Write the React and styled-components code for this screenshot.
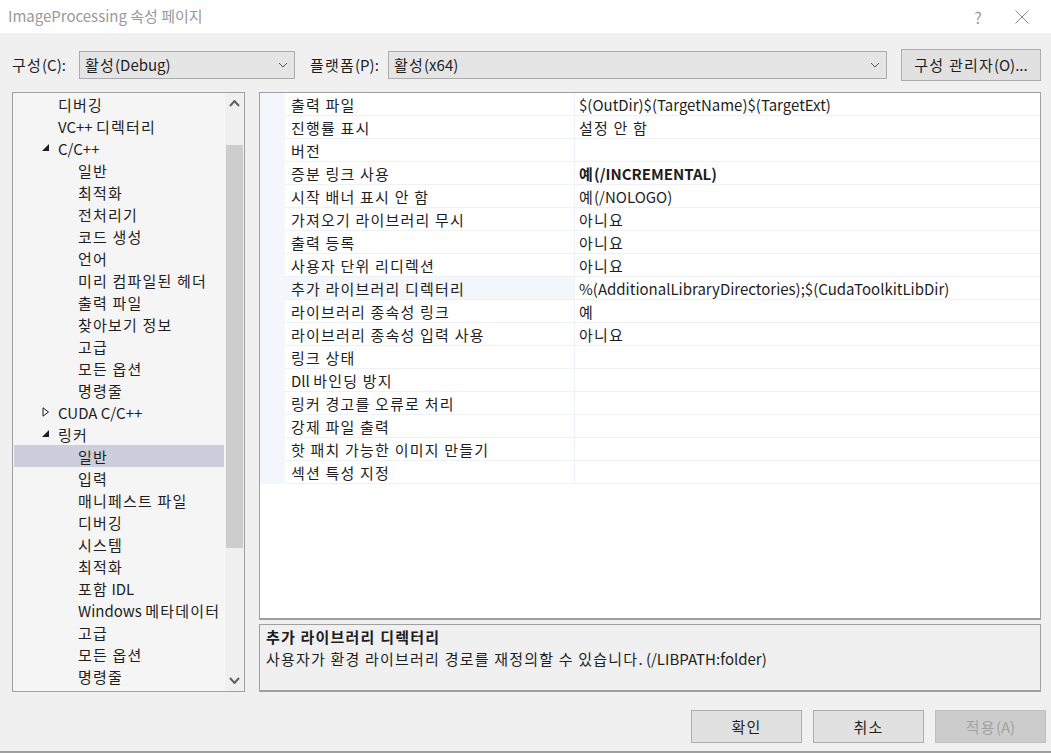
import React from "react";
import styled, { createGlobalStyle } from "styled-components";

const Global = createGlobalStyle`
  html, body { margin: 0; padding: 0; background: #f0f0f0; }
  body { font-family: "Noto Sans CJK KR", "Noto Sans", sans-serif; color: #1e1e1e; }
  * { box-sizing: border-box; }
`;

const FONT = `"Noto Sans CJK KR", "Noto Sans", sans-serif`;

const HangulRun = styled.span`
  letter-spacing: 1.2px;
`;

const T = ({ children }) => {
  const s = String(children);
  const parts = s.split(/([\u3131-\ud7a3]+(?:\s+[\u3131-\ud7a3]+)*)/);
  return parts.map((p, i) =>
    /[\u3131-\ud7a3]/.test(p) ? <HangulRun key={i}>{p}</HangulRun> : p ? <React.Fragment key={i}>{p}</React.Fragment> : null
  );
};

const Window = styled.div`
  width: 1051px;
  height: 753px;
  display: flex;
  flex-direction: column;
  background: #f0f0f0;
  border-bottom: 2px solid #9f9f9f;
  font-family: ${FONT};
  font-size: 15px;
  overflow: hidden;
`;

const TitleBar = styled.div`
  height: 33px;
  flex: none;
  background: #ffffff;
  display: flex;
  align-items: center;
  padding-left: 8px;
`;

const Title = styled.div`
  flex: 1;
  color: #999999;
  font-size: 15px;
  line-height: 20px;
  margin-top: -2px;
`;

const TitleButton = styled.div`
  width: ${(p) => p.$w}px;
  height: 32px;
  display: flex;
  align-items: center;
  justify-content: center;
  color: #9a9a9a;
  font-size: 16px;
`;

const ConfigRow = styled.div`
  display: flex;
  align-items: center;
  height: 32px;
  margin-top: 16px;
  padding-left: 12px;
`;

const Label = styled.div`
  width: ${(p) => p.$w}px;
  flex: none;
  font-size: 15px;
  line-height: 20px;
  color: #1e1e1e;
`;

const Combo = styled.div`
  width: ${(p) => p.$w}px;
  height: 28px;
  flex: none;
  margin-right: ${(p) => p.$mr || 0}px;
  background: #e5e5e5;
  border: 1px solid #acacac;
  display: flex;
  align-items: center;
  padding: 0 6px 0 5px;
  font-size: 15px;
  color: #1e1e1e;
`;

const ComboText = styled.div`
  flex: 1;
  line-height: 20px;
`;

const Button = styled.div`
  width: ${(p) => p.$w}px;
  height: ${(p) => p.$h}px;
  flex: none;
  background: ${(p) => (p.$disabled ? "#cccccc" : "#e1e1e1")};
  border: 1px solid ${(p) => (p.$disabled ? "#bfbfbf" : "#adadad")};
  color: ${(p) => (p.$disabled ? "#a2a2a2" : "#1e1e1e")};
  display: flex;
  align-items: center;
  justify-content: center;
  font-size: 15px;
  line-height: 20px;
`;

const Main = styled.div`
  display: flex;
  margin-top: 11px;
  padding-left: 12px;
  height: 600px;
  gap: 14px;
`;

const TreePanel = styled.div`
  width: 233px;
  height: 600px;
  flex: none;
  border: 1px solid #a0a0a0;
  background: #f5f5f5;
  display: flex;
`;

const TreeList = styled.div`
  flex: 1;
  padding: 0 0 0 1px;
  display: flex;
  flex-direction: column;
  overflow: hidden;
`;

const TreeRow = styled.div`
  height: 22px;
  flex: none;
  display: flex;
  align-items: center;
  padding-left: ${(p) => p.$level * 20 + 4}px;
  background: ${(p) => (p.$selected ? "#cccedb" : "transparent")};
  font-size: 15px;
  color: #1e1e1e;
  white-space: pre;
`;

const Expander = styled.div`
  width: 20px;
  height: 22px;
  flex: none;
  display: flex;
  align-items: center;
  justify-content: center;
  padding-right: 4px;
`;

const ScrollBar = styled.div`
  width: 20px;
  flex: none;
  background: #f0f0f0;
  border-left: 1px solid #f8f8f8;
  display: flex;
  flex-direction: column;
`;

const ScrollArrow = styled.div`
  height: 21px;
  flex: none;
  display: flex;
  align-items: center;
  justify-content: center;
`;

const ScrollTrack = styled.div`
  flex: 1;
  padding: 31px 1px 0 1px;
`;

const Thumb = styled.div`
  height: 403px;
  background: #cdcdcd;
`;

const RightCol = styled.div`
  width: 782px;
  flex: none;
  display: flex;
  flex-direction: column;
  gap: 4px;
`;

const Grid = styled.div`
  height: 528px;
  flex: none;
  background: #ffffff;
  border: 1px solid #a0a0a0;
  border-bottom-width: 2px;
  display: flex;
  flex-direction: column;
`;

const GridRow = styled.div`
  height: 23px;
  display: flex;
  flex: none;
`;

const Gutter = styled.div`
  width: 25px;
  flex: none;
  background: #f3f6fb;
`;

const NameCell = styled.div`
  width: 289px;
  flex: none;
  padding-left: 6px;
  display: flex;
  align-items: center;
  border-bottom: 1px solid #eef1f6;
  background: ${(p) => (p.$selected ? "#f3f6fb" : "#ffffff")};
  white-space: pre;
`;

const ValueCell = styled.div`
  flex: 1;
  padding-left: 4px;
  display: flex;
  align-items: center;
  border-left: 1px solid #eef1f6;
  border-bottom: 1px solid #eef1f6;
  font-weight: ${(p) => (p.$bold ? 700 : 400)};
  white-space: pre;
`;

const Desc = styled.div`
  height: 68px;
  flex: none;
  border: 1px solid #a0a0a0;
  border-bottom-width: 2px;
  background: #f0f0f0;
  padding: 1px 6px 0 6px;
  display: flex;
  flex-direction: column;
`;

const DescTitle = styled.div`
  font-weight: 700;
  line-height: 22px;
`;

const DescText = styled.div`
  line-height: 22px;
`;

const Footer = styled.div`
  display: flex;
  justify-content: flex-end;
  gap: 11px;
  margin-top: 18px;
  padding-right: 5px;
`;

const Chevron = ({ up, color = "#606060", w = 10, h = 6, sw = 1 }) => (
  <svg width={w} height={h} viewBox={`0 0 ${w} ${h}`}>
    <polyline
      points={up ? `1,${h - 1} ${w / 2},1 ${w - 1},${h - 1}` : `1,1 ${w / 2},${h - 1} ${w - 1},1`}
      fill="none"
      stroke={color}
      strokeWidth={sw}
    />
  </svg>
);

const ExpandIcon = ({ state }) =>
  state === "open" ? (
    <svg width="8" height="8" viewBox="0 0 8 8">
      <polygon points="7,0 7,7 0,7" fill="#1e1e1e" />
    </svg>
  ) : (
    <svg width="8" height="10" viewBox="0 0 8 10">
      <polygon points="1,0.8 6.5,5 1,9.2" fill="none" stroke="#1e1e1e" strokeWidth="1" />
    </svg>
  );

const treeItems = [
  { l: 1, t: "디버깅" },
  { l: 1, t: "VC++ 디렉터리" },
  { l: 1, t: "C/C++", e: "open" },
  { l: 2, t: "일반" },
  { l: 2, t: "최적화" },
  { l: 2, t: "전처리기" },
  { l: 2, t: "코드 생성" },
  { l: 2, t: "언어" },
  { l: 2, t: "미리 컴파일된 헤더" },
  { l: 2, t: "출력 파일" },
  { l: 2, t: "찾아보기 정보" },
  { l: 2, t: "고급" },
  { l: 2, t: "모든 옵션" },
  { l: 2, t: "명령줄" },
  { l: 1, t: "CUDA C/C++", e: "closed" },
  { l: 1, t: "링커", e: "open" },
  { l: 2, t: "일반", s: true },
  { l: 2, t: "입력" },
  { l: 2, t: "매니페스트 파일" },
  { l: 2, t: "디버깅" },
  { l: 2, t: "시스템" },
  { l: 2, t: "최적화" },
  { l: 2, t: "포함 IDL" },
  { l: 2, t: "Windows 메타데이터" },
  { l: 2, t: "고급" },
  { l: 2, t: "모든 옵션" },
  { l: 2, t: "명령줄" },
];

const props = [
  ["출력 파일", "$(OutDir)$(TargetName)$(TargetExt)"],
  ["진행률 표시", "설정 안 함"],
  ["버전", ""],
  ["증분 링크 사용", "예(/INCREMENTAL)", "bold"],
  ["시작 배너 표시 안 함", "예(/NOLOGO)"],
  ["가져오기 라이브러리 무시", "아니요"],
  ["출력 등록", "아니요"],
  ["사용자 단위 리디렉션", "아니요"],
  ["추가 라이브러리 디렉터리", "%(AdditionalLibraryDirectories);$(CudaToolkitLibDir)", "sel"],
  ["라이브러리 종속성 링크", "예"],
  ["라이브러리 종속성 입력 사용", "아니요"],
  ["링크 상태", ""],
  ["Dll 바인딩 방지", ""],
  ["링커 경고를 오류로 처리", ""],
  ["강제 파일 출력", ""],
  ["핫 패치 가능한 이미지 만들기", ""],
  ["섹션 특성 지정", ""],
];

export default function App() {
  return (
    <>
      <Global />
      <Window>
        <TitleBar>
          <Title>ImageProcessing 속성 페이지</Title>
          <TitleButton $w={30}>?</TitleButton>
          <TitleButton $w={58}>
            <svg width="14" height="14" viewBox="0 0 14 14">
              <path d="M0.5,0.5 L13.5,13.5 M13.5,0.5 L0.5,13.5" stroke="#8a8a8a" strokeWidth="1" />
            </svg>
          </TitleButton>
        </TitleBar>

        <ConfigRow>
          <Label $w={67}><T>구성(C):</T></Label>
          <Combo $w={216} $mr={15}>
            <ComboText><T>활성(Debug)</T></ComboText>
            <Chevron color="#555" w={10} h={6} />
          </Combo>
          <Label $w={78}><T>플랫폼(P):</T></Label>
          <Combo $w={499} $mr={14}>
            <ComboText><T>활성(x64)</T></ComboText>
            <Chevron color="#555" w={10} h={6} />
          </Combo>
          <Button $w={140} $h={32}><span><T>구성 관리자(O)...</T></span></Button>
        </ConfigRow>

        <Main>
          <TreePanel>
            <TreeList>
              {treeItems.map((it, i) => (
                <TreeRow key={i} $level={it.l} $selected={it.s}>
                  <Expander>{it.e ? <ExpandIcon state={it.e} /> : null}</Expander>
                  <span><T>{it.t}</T></span>
                </TreeRow>
              ))}
            </TreeList>
            <ScrollBar>
              <ScrollArrow>
                <Chevron up color="#606060" w={11} h={7} sw={2} />
              </ScrollArrow>
              <ScrollTrack>
                <Thumb />
              </ScrollTrack>
              <ScrollArrow>
                <Chevron color="#606060" w={11} h={7} sw={2} />
              </ScrollArrow>
            </ScrollBar>
          </TreePanel>

          <RightCol>
            <Grid>
              {props.map(([n, v, f], i) => (
                <GridRow key={i}>
                  <Gutter />
                  <NameCell $selected={f === "sel"}><span><T>{n}</T></span></NameCell>
                  <ValueCell $bold={f === "bold"}><span><T>{v}</T></span></ValueCell>
                </GridRow>
              ))}
            </Grid>
            <Desc>
              <DescTitle><T>추가 라이브러리 디렉터리</T></DescTitle>
              <DescText><T>사용자가 환경 라이브러리 경로를 재정의할 수 있습니다. (/LIBPATH:folder)</T></DescText>
            </Desc>
          </RightCol>
        </Main>

        <Footer>
          <Button $w={111} $h={33}><span><T>확인</T></span></Button>
          <Button $w={111} $h={33}><span><T>취소</T></span></Button>
          <Button $w={111} $h={33} $disabled><span><T>적용(A)</T></span></Button>
        </Footer>
      </Window>
    </>
  );
}
